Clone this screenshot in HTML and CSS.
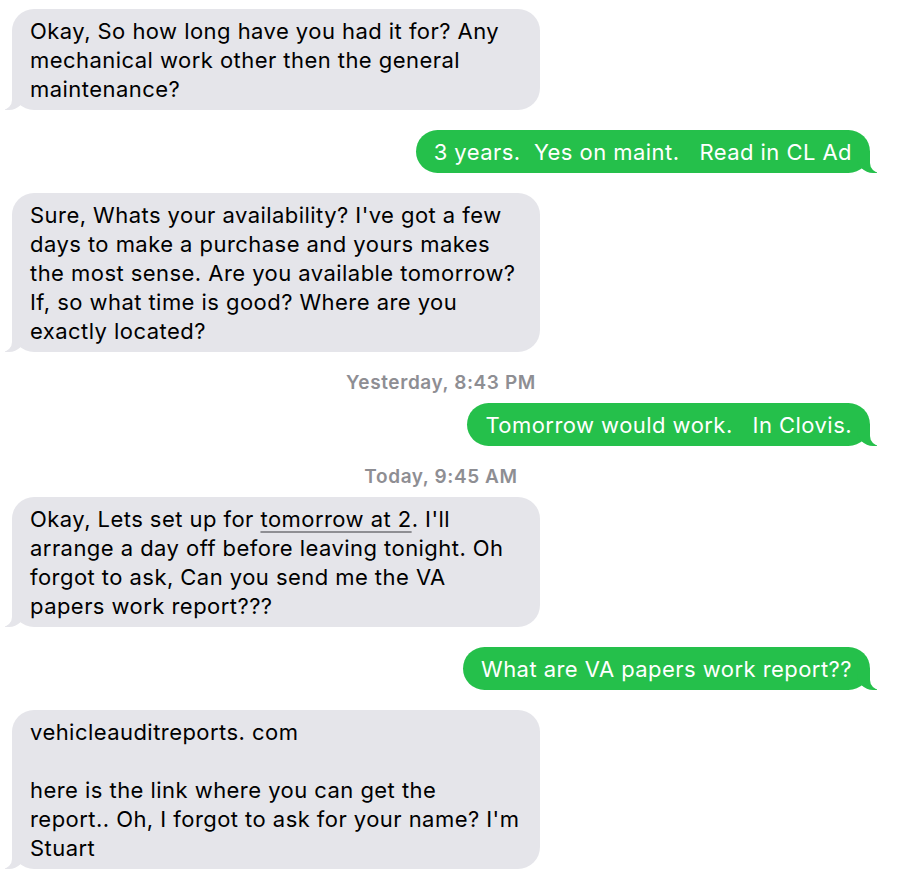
FILE: index.html
```html
<!DOCTYPE html>
<html lang="en">
<head>
    <meta charset="UTF-8">
    <meta name="viewport" content="width=device-width, initial-scale=1.0">
    <title>Messages</title>
    <link rel="stylesheet" href="styles.css">
</head>
<body>

    <div class="thread">
        <div class="msg them">Okay, So how long have you had it for? Any mechanical work other then the general maintenance?</div>

        <div class="msg me">3 years.  Yes on maint.   Read in CL Ad</div>

        <div class="msg them">Sure, Whats your availability? I've got a few days to make a purchase and yours makes the most sense. Are you available tomorrow? If, so what time is good? Where are you exactly located?</div>

        <div class="stamp">Yesterday, 8:43 PM</div>

        <div class="msg me">Tomorrow would work.   In Clovis.</div>

        <div class="stamp">Today, 9:45 AM</div>

        <div class="msg them">Okay, Lets set up for <span class="link">tomorrow at 2</span>. I'll arrange a day off before leaving tonight. Oh forgot to ask, Can you send me the VA papers work report???</div>

        <div class="msg me">What are VA papers work report??</div>

        <div class="msg them">vehicleauditreports. com<br><br>here is the link where you can get the report.. Oh, I forgot to ask for your name? I'm Stuart</div>
    </div>

</body>
</html>
```

FILE: styles.css
```css
body {
    margin: 0;
    background: #fff;
    font-family: Inter, "Liberation Sans", sans-serif;
}
.thread {
    display: flex;
    flex-direction: column;
    padding: 9px 30px 0 12px;
}
.msg {
    position: relative;
    max-width: 492px;
    padding: 8px 18px 6px;
    border-radius: 22px;
    font-size: 22px;
    letter-spacing: 0.45px;
    line-height: 29px;
    margin-top: 20px;
}
.msg:first-child {
    margin-top: 0;
}
.them {
    align-self: flex-start;
    background: #e5e5ea;
    color: #000;
}
.me {
    align-self: flex-end;
    background: #25c04b;
    color: #fff;
    white-space: pre;
}

/* bubble tails */
.them::before,
.me::before {
    content: "";
    position: absolute;
    bottom: 0;
    width: 20px;
    height: 22px;
}
.them::after,
.me::after {
    content: "";
    position: absolute;
    bottom: 0;
    width: 10px;
    height: 22px;
    background: #fff;
}
.them::before {
    left: -7px;
    background: #e5e5ea;
    border-bottom-right-radius: 16px;
}
.them::after {
    left: -10px;
    border-bottom-right-radius: 10px;
}
.me::before {
    right: -7px;
    background: #25c04b;
    border-bottom-left-radius: 16px;
}
.me::after {
    right: -10px;
    border-bottom-left-radius: 10px;
}

.link {
    text-decoration: underline;
    text-decoration-color: #8e8e93;
    text-underline-offset: 4px;
}
.stamp {
    align-self: center;
    margin: 21px 0 10px;
    font-size: 19px;
    letter-spacing: 0.6px;
    line-height: 20px;
    font-weight: 600;
    color: #8e8e93;
}
.stamp + .msg {
    margin-top: 0;
}
```
